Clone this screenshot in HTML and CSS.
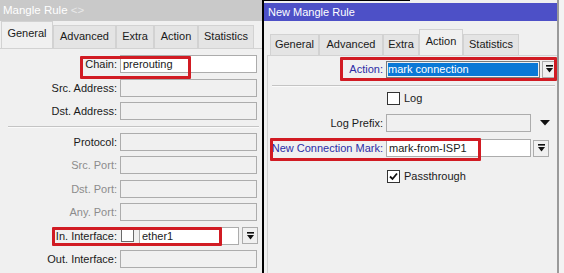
FILE: index.html
```html
<!DOCTYPE html>
<html>
	<head>
		<meta charset="utf-8">
		<title>Mangle Rule</title>
		<link rel="stylesheet" href="styles.css">
	</head>

	<body>
		<div class="screen">

			<!-- existing rule, inactive window -->
			<div class="win win-left">
				<div class="title title-grey">Mangle Rule <span class="title-dim">&lt;&gt;</span></div>
				<div class="tabs tabs-left">
					<div class="tab tab-active lt-general">General</div>
					<div class="tab lt-advanced">Advanced</div>
					<div class="tab lt-extra">Extra</div>
					<div class="tab lt-action">Action</div>
					<div class="tab lt-stats">Statistics</div>
				</div>
				<div class="panel panel-left">
					<div class="row">
						<div class="label">Chain:</div>
						<div class="field field-white">prerouting</div>
					</div>
					<div class="row">
						<div class="label">Src. Address:</div>
						<div class="field"></div>
					</div>
					<div class="row">
						<div class="label">Dst. Address:</div>
						<div class="field"></div>
					</div>
					<div class="sep sep-left"></div>
					<div class="row">
						<div class="label">Protocol:</div>
						<div class="field"></div>
					</div>
					<div class="row">
						<div class="label label-off">Src. Port:</div>
						<div class="field"></div>
					</div>
					<div class="row">
						<div class="label label-off">Dst. Port:</div>
						<div class="field"></div>
					</div>
					<div class="row">
						<div class="label label-off">Any. Port:</div>
						<div class="field"></div>
					</div>
					<div class="row">
						<div class="label">In. Interface:</div>
						<div class="check check-inline"></div>
						<div class="field field-white field-iface">ether1</div>
						<div class="drop">
							<svg width="9" height="8" viewBox="0 0 9 8"><rect x="1" y="0" width="7" height="1.6" fill="#111"/><polygon points="1,3 8,3 4.5,7.5" fill="#111"/></svg>
						</div>
					</div>
					<div class="row">
						<div class="label">Out. Interface:</div>
						<div class="field"></div>
					</div>
				</div>
			</div>

			<div class="divider"></div>

			<!-- new rule, active window -->
			<div class="win win-right">
				<div class="edge"><div class="edge-line"></div></div>
				<div class="title title-blue">New Mangle Rule</div>
				<div class="tabs tabs-right">
					<div class="tab rt-general">General</div>
					<div class="tab rt-advanced">Advanced</div>
					<div class="tab rt-extra">Extra</div>
					<div class="tab tab-active rt-action">Action</div>
					<div class="tab rt-stats">Statistics</div>
				</div>
				<div class="panel panel-right">
					<div class="row row-r">
						<div class="label label-r label-blue">Action:</div>
						<div class="field field-sel">mark connection</div>
						<div class="drop drop-action">
							<svg width="9" height="8" viewBox="0 0 9 8"><rect x="1" y="0" width="7" height="1.6" fill="#111"/><polygon points="1,3 8,3 4.5,7.5" fill="#111"/></svg>
						</div>
					</div>
					<div class="sep sep-right"></div>
					<div class="row row-r">
						<div class="label label-r"></div>
						<div class="check"></div>
						<div class="check-text">Log</div>
					</div>
					<div class="row row-r">
						<div class="label label-r">Log Prefix:</div>
						<div class="field field-short"></div>
						<div class="arrow">
							<svg width="10" height="6" viewBox="0 0 10 6"><polygon points="0,0 10,0 5,5.5" fill="#111"/></svg>
						</div>
					</div>
					<div class="row row-r">
						<div class="label label-r label-blue">New Connection Mark:</div>
						<div class="field field-white field-short">mark-from-ISP1</div>
						<div class="drop drop-mark">
							<svg width="9" height="8" viewBox="0 0 9 8"><rect x="1" y="0" width="7" height="1.6" fill="#111"/><polygon points="1,3 8,3 4.5,7.5" fill="#111"/></svg>
						</div>
					</div>
					<div class="row row-r row-pass">
						<div class="label label-r"></div>
						<div class="check">
							<svg width="11" height="11" viewBox="0 0 11 11"><polyline points="2,5.5 4.5,8 9,2.5" fill="none" stroke="#111" stroke-width="1.8"/></svg>
						</div>
						<div class="check-text">Passthrough</div>
					</div>
				</div>
			</div>

			<div class="filler"></div>

			<!-- red highlight boxes drawn over the dialogs -->
			<div class="mark mark-chain"></div>
			<div class="mark mark-iface"></div>
			<div class="mark mark-action"></div>
			<div class="mark mark-conn"></div>
		</div>
	</body>
</html>
```

FILE: styles.css
```css
body {
	margin: 0;
	background-color: #f0f0f0;
}

.screen {
	position: relative;
	display: flex;
	width: 564px;
	height: 273px;
	overflow: hidden;
	background-color: #f0f0f0;
	font-family: "Liberation Sans", Arial, sans-serif;
	font-size: 11px;
	color: #1a1a1a;
}

.win {
	display: flex;
	flex-direction: column;
	flex: none;
}

.win-left {
	width: 262px;
}

.win-right {
	width: 295px;
	box-sizing: border-box;
	border-right: 2px solid #9a9a9a;
}

.divider {
	width: 2px;
	flex: none;
	background-color: #000;
}

.filler {
	flex: 1;
	background-color: #f3f3f3;
}

/* title bars */

.title {
	color: #fff;
	padding-left: 4px;
	white-space: nowrap;
}

.title-grey {
	height: 21px;
	line-height: 21px;
	font-size: 11.5px;
	padding-left: 3px;
	background-color: #c9c9c9;
}

.title-dim {
	color: #e8e8e8;
}

.edge {
	height: 3px;
	background-color: #f0f0f0;
}

.edge-line {
	width: 146px;
	height: 1px;
	background-color: #000;
}

.title-blue {
	height: 18px;
	line-height: 18px;
	background-color: #4d50c7;
}

/* tabs */

.tabs {
	display: flex;
	align-items: flex-end;
}

.tabs-left {
	height: 29px;
	padding-left: 1px;
}

.tabs-right {
	height: 34px;
	padding-left: 6px;
}

.tab {
	box-sizing: border-box;
	height: 23px;
	line-height: 21px;
	text-align: center;
	background-color: #e4e4e4;
	border: 1px solid #d2d2d2;
	border-bottom: none;
	white-space: nowrap;
}

.tabs-right .tab {
	height: 21px;
	line-height: 19px;
}

.tabs .tab-active {
	height: 27px;
	line-height: 23px;
	background-color: #f0f0f0;
}

.tabs-right .tab-active {
	height: 26px;
	line-height: 22px;
}

.lt-general { width: 52px; }
.lt-advanced { width: 63px; }
.lt-extra { width: 38px; }
.lt-action { width: 44px; }
.lt-stats { width: 56px; }

.rt-general { width: 49px; }
.rt-advanced { width: 64px; }
.rt-extra { width: 36px; }
.rt-action { width: 44px; }
.rt-stats { width: 56px; }

/* panels and rows */

.panel {
	flex: 1;
	border-top: 1px solid #d2d2d2;
}

.panel-left {
	padding-top: 6px;
}

.panel-right {
	margin-left: 3px;
	border-left: 1px solid #d2d2d2;
	padding-top: 4px;
}

.row {
	display: flex;
	align-items: center;
	height: 18px;
	margin-bottom: 5.5px;
}

.row-r {
	margin-bottom: 7px;
}

/* margins collapse here, so this is the full gap */
.row-pass {
	margin-top: 10px;
}

.label {
	width: 117px;
	flex: none;
	text-align: right;
	padding-right: 3px;
	white-space: nowrap;
}

.label-r {
	width: 115px;
	padding-right: 3px;
}

.label-off {
	color: #8c8c8c;
}

.label-blue {
	color: #2c2ca6;
}

.field {
	box-sizing: border-box;
	width: 137px;
	height: 18px;
	line-height: 16px;
	padding-left: 2px;
	border: 1px solid #acacac;
	background-color: #f0f0f0;
	white-space: nowrap;
}

.field-white {
	background-color: #fff;
}

.field-iface {
	width: 100px;
	margin-left: 5px;
}

.field-sel {
	width: 154px;
	height: 17px;
	padding: 1px;
	line-height: 13px;
	border-color: #7a7a7a;
	background-clip: content-box;
	background-color: #0a78d6;
	color: #fff;
}

.field-short {
	width: 145px;
}

.drop {
	box-sizing: border-box;
	width: 16px;
	height: 17px;
	margin-left: 3px;
	border: 1px solid #acacac;
	background-color: #f0f0f0;
	display: flex;
	align-items: center;
	justify-content: center;
}

.drop-action {
	margin-left: 2px;
	width: 14px;
}

.drop-mark {
	margin-left: 2px;
}

.arrow {
	margin-left: 9px;
	display: flex;
	align-items: center;
}

.check {
	box-sizing: border-box;
	width: 13px;
	height: 13px;
	border: 1px solid #333;
	background-color: #fff;
	flex: none;
	display: flex;
	align-items: center;
	justify-content: center;
}

.check-inline {
	margin-left: 1px;
	border-color: #6a6a6a;
}

.row-r .check {
	margin-left: 1px;
}

.check-text {
	margin-left: 4px;
}

.sep {
	height: 1px;
	background-color: #c4c4c4;
	border-bottom: 1px solid #fafafa;
}

.sep-left {
	margin: 0.5px 3px 5px 8px;
}

.sep-right {
	margin: 0 2px 2px 4px;
}

/* red call-out boxes */

.mark {
	position: absolute;
	box-sizing: border-box;
	border: 3px solid #d11b23;
	border-radius: 1px;
}

.mark-chain {
	left: 80px;
	top: 56px;
	width: 111px;
	height: 23px;
}

.mark-iface {
	left: 52px;
	top: 227px;
	width: 170px;
	height: 19px;
}

.mark-action {
	left: 340px;
	top: 57px;
	width: 217px;
	height: 24px;
}

.mark-conn {
	left: 270px;
	top: 138px;
	width: 211px;
	height: 23px;
}
```
